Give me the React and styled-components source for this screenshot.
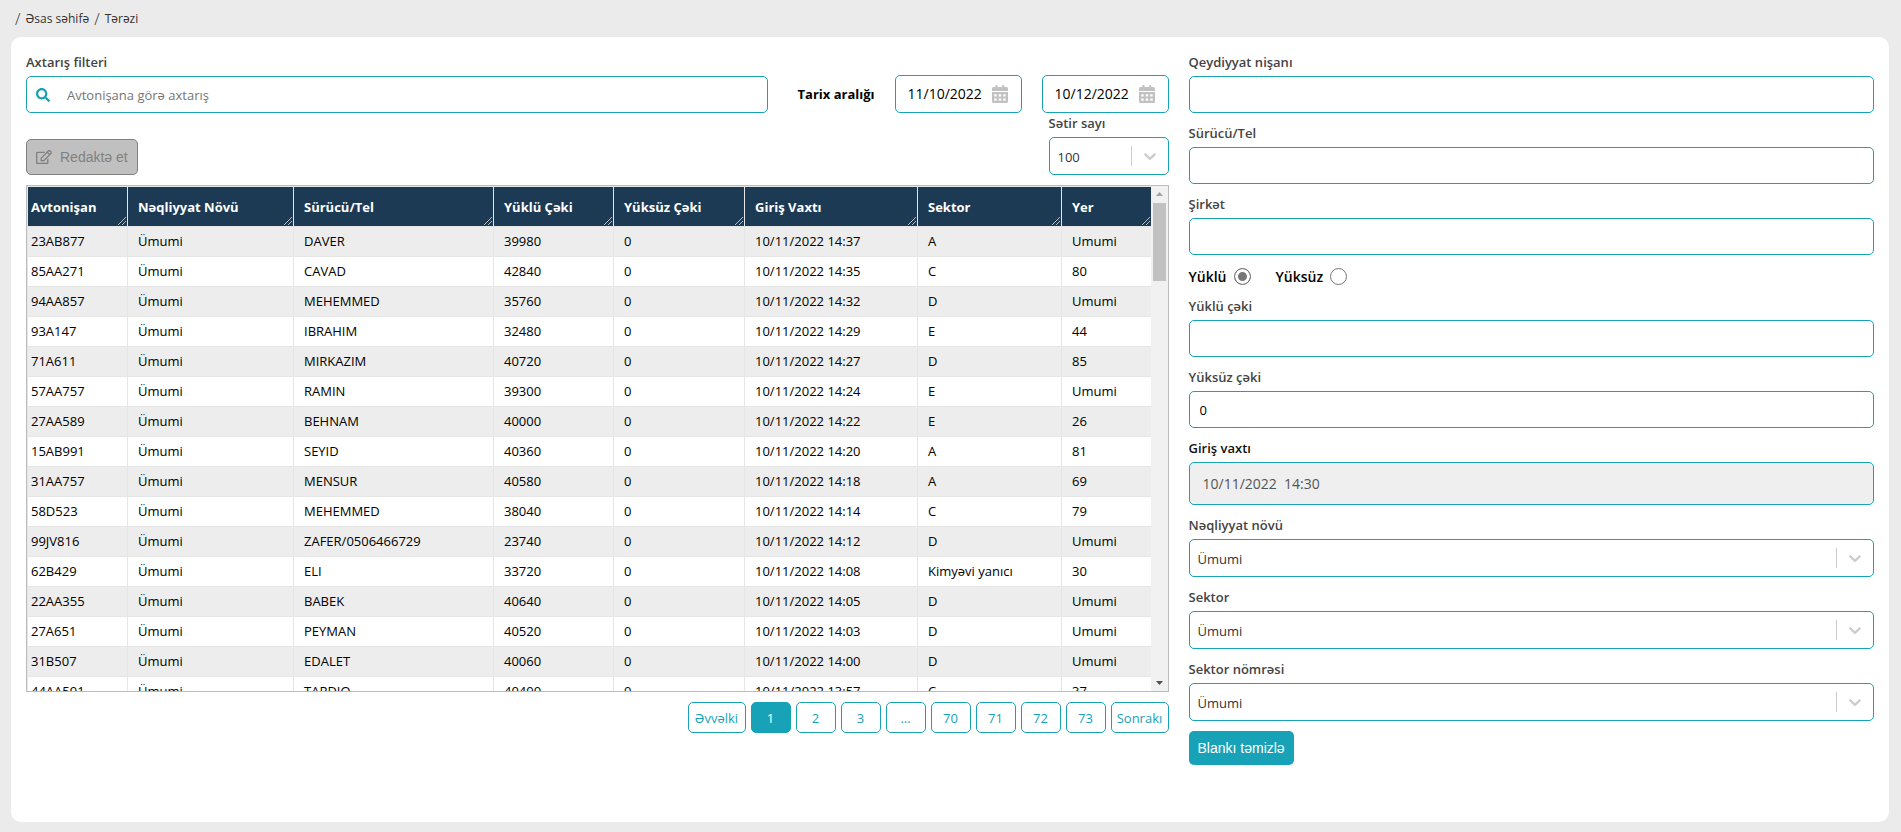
import React, { useId } from "react";
import styled, { createGlobalStyle, css } from "styled-components";
import { FaSearch, FaRegEdit } from "react-icons/fa";

const accent = "#17a2b8";
const sans = `"Open Sans", "Noto Sans", sans-serif`;

const GlobalStyle = createGlobalStyle`
  *, *::before, *::after { box-sizing: border-box; }
  body { margin: 0; background: #ebebeb; color: #000; font: 13px/20px ${sans}; }
  button, input, select { font: inherit; margin: 0; }
`;

const Page = styled.div`
  min-height: 100vh;
  padding: 0 12px 10px 11px;
  display: flex;
  flex-direction: column;
`;

const Breadcrumb = styled.nav`
  height: 37px;
  padding-left: 4px;
  display: flex;
  align-items: center;
  gap: 5px;
  color: #333;
  font-size: 12px;

  a { color: inherit; text-decoration: none; }
`;

const Slash = styled.span`
  font-size: 16px;
  font-weight: 300;
`;

const Card = styled.main`
  flex: 1;
  background: #fff;
  border-radius: 10px;
  padding: 15px;
  display: grid;
  grid-template-columns: 5fr 3fr;
  gap: 20px;
  align-items: start;
`;

const Panel = styled.section`
  min-width: 0;
  display: flex;
  flex-direction: column;
`;

const Form = styled.form`
  min-width: 0;
  display: flex;
  flex-direction: column;
  align-items: stretch;
  gap: 10px;
`;

const FieldBox = styled.div`
  display: flex;
  flex-direction: column;
  gap: 4px;
  flex: ${(p) => (p.$grow ? "1" : "none")};
  width: ${(p) => p.$width || "auto"};
`;

const Label = styled.label`
  font-size: 13px;
  line-height: 20px;
  font-weight: 600;
  color: ${(p) => (p.$strong ? "#111" : "#444")};
`;

const control = css`
  width: 100%;
  border: 1px solid ${accent};
  border-radius: 5px;
  background: #fff;
  outline: none;
`;

const TextInput = styled.input`
  ${control}
  height: ${(p) => (p.disabled ? "43px" : "37px")};
  padding: 0 ${(p) => (p.disabled ? "13px" : "10px")};
  ${(p) => p.disabled && "background: #efefef; color: #545454; font-size: 14px;"}
`;

const SearchBox = styled.div`
  ${control}
  height: 37px;
  display: flex;
  align-items: center;
  gap: 17px;
  padding: 0 9px;
  color: ${accent};

  input {
    flex: 1;
    border: 0;
    padding: 0;
    outline: none;
    background: none;
    font-size: 13px;
  }
  input::placeholder { color: #757575; }
`;

const SelectBox = styled.div`
  ${control}
  height: 38px;
  display: flex;
  align-items: center;
  gap: 8px;
  padding-right: 8px;

  select {
    appearance: none;
    flex: 1;
    min-width: 0;
    height: 100%;
    border: 0;
    padding: 1px 8px 0;
    background: none;
    color: #333;
    outline: none;
  }
`;

const Divider = styled.span`
  width: 1px;
  height: 20px;
  background: #ccc;
`;

const FilterRow = styled.div`
  display: flex;
  align-items: flex-end;
  gap: 20px;
`;

const RangeTitle = styled.span`
  align-self: flex-end;
  margin-left: 10px;
  line-height: 38px;
  font-weight: 700;
  white-space: nowrap;
`;

const DateBox = styled.div`
  ${control}
  width: 127px;
  height: 38px;
  padding: 0 13px 0 12px;
  display: flex;
  align-items: center;
  gap: 6px;

  input {
    flex: 1;
    min-width: 0;
    border: 0;
    padding: 0;
    outline: none;
    background: none;
    color: #000;
    font-size: 14px;
  }
  svg { flex: none; }
`;

const ToolRow = styled.div`
  display: flex;
  align-items: flex-end;
  justify-content: space-between;
  margin-bottom: 10px;
`;

const EditButton = styled.button`
  height: 36px;
  padding: 0 9px;
  display: flex;
  align-items: center;
  gap: 8px;
  border: 1px solid #808080;
  border-radius: 5px;
  background: #c0c0c0;
  color: #808080;
  font: 14px "Liberation Sans", Arial, sans-serif;
`;

const TableFrame = styled.div`
  display: flex;
  height: 507px;
  border: 1px solid #bbb;
`;

const TableScroll = styled.div`
  flex: 1;
  min-width: 0;
  overflow: hidden auto;
  scrollbar-width: none;
`;

const Table = styled.table`
  width: 100%;
  table-layout: fixed;
  border-collapse: collapse;

  th, td {
    height: 30px;
    padding: 0 0 2px 10px;
    border: 1px solid #e6e6e6;
    text-align: left;
    white-space: nowrap;
    overflow: hidden;
  }
  th:first-child, td:first-child { padding-left: 3px; }
  th {
    position: relative;
    height: 40px;
    padding-bottom: 0;
    background: #1c3a53;
    color: #fff;
    font-weight: 700;
  }
  tbody tr:nth-child(odd) { background: #ededed; }
`;

const Grip = styled.svg`
  position: absolute;
  right: 1px;
  bottom: 1px;
`;

const ScrollTrack = styled.div`
  width: 17px;
  background: #f1f1f1;
  display: flex;
  flex-direction: column;
  align-items: center;
`;

const Thumb = styled.div`
  width: 13px;
  height: 78px;
  margin-bottom: auto;
  background: #c1c1c1;
`;

const Pager = styled.nav`
  display: flex;
  justify-content: flex-end;
  gap: 5px;
  margin-top: 10px;
`;

const PageButton = styled.button`
  height: 31px;
  width: ${(p) => (p.$wide ? "58px" : "40px")};
  padding: 0;
  border: 1px solid ${accent};
  border-radius: 5px;
  background: ${(p) => (p.$active ? accent : "#fff")};
  color: ${(p) => (p.$active ? "#fff" : accent)};
`;

const RadioRow = styled.div`
  display: flex;
  gap: 25px;
  height: 21px;
  padding-top: 2px;
`;

const RadioLabel = styled.label`
  display: flex;
  align-items: center;
  gap: 7px;
  font-size: 14px;
  font-weight: 600;

  input {
    appearance: none;
    width: 17px;
    height: 17px;
    border: 1px solid #767676;
    border-radius: 50%;
    background: #fff;
  }
  input:checked {
    background: #767676;
    box-shadow: inset 0 0 0 3px #fff;
  }
`;

const ClearButton = styled.button`
  align-self: flex-start;
  height: 34px;
  padding: 0 9px;
  border: 0;
  border-radius: 5px;
  background: ${accent};
  color: #fff;
  font: 14px "Liberation Sans", Arial, sans-serif;
`;

function Chevron() {
  return (
    <svg width="20" height="20" viewBox="0 0 20 20" fill="#ccc" aria-hidden="true">
      <path d="M4.516 7.548c0.436-0.446 1.043-0.481 1.576 0l3.908 3.747 3.908-3.747c0.533-0.481 1.141-0.446 1.574 0 0.436 0.445 0.408 1.197 0 1.615-0.406 0.418-4.695 4.502-4.695 4.502-0.217 0.223-0.502 0.335-0.787 0.335s-0.57-0.112-0.789-0.335c0 0-4.287-4.084-4.695-4.502s-0.436-1.17 0-1.615z" />
    </svg>
  );
}

function ScrollArrow({ down }) {
  return (
    <svg width="17" height="17" viewBox="0 0 17 17" aria-hidden="true">
      <path d={down ? "M5 7h7l-3.500 4z" : "M5 10h7l-3.500-4z"} fill={down ? "#505050" : "#a3a3a3"} />
    </svg>
  );
}

function CalendarIcon() {
  return (
    <svg width="16" height="18" viewBox="0 0 16 18" aria-hidden="true">
      <path
        fill="#c1c1c1"
        fillRule="evenodd"
        d="M3.500 0h2v2h4.700V0h2v2H14.500a1.500 1.500 0 0 1 1.500 1.500V6H0V3.500A1.500 1.500 0 0 1 1.500 2h2zM0 7h16v9.500a1.500 1.500 0 0 1-1.500 1.500h-13A1.500 1.500 0 0 1 0 16.500zM2.200 9.200v2.400h2.500V9.200zm4.500 0v2.400h2.500V9.200zm4.500 0v2.400h2.500V9.200zm-9 4.200v2.400h2.500v-2.400zm4.500 0v2.400h2.500v-2.400zm4.500 0v2.400h2.500v-2.400z"
      />
    </svg>
  );
}

function Field({ label, strong, ...rest }) {
  const id = useId();
  return (
    <FieldBox>
      <Label htmlFor={id} $strong={strong}>{label}</Label>
      <TextInput id={id} {...rest} />
    </FieldBox>
  );
}

function SelectField({ label, value, width }) {
  const id = useId();
  return (
    <FieldBox $width={width}>
      <Label htmlFor={id}>{label}</Label>
      <SelectBox>
        <select id={id} defaultValue={value}>
          <option>{value}</option>
        </select>
        <Divider />
        <Chevron />
      </SelectBox>
    </FieldBox>
  );
}

function DateField({ value, label }) {
  return (
    <DateBox>
      <input type="text" defaultValue={value} aria-label={label} />
      <CalendarIcon />
    </DateBox>
  );
}

const columns = [
  ["Avtonişan", 100],
  ["Nəqliyyat Növü", 166],
  ["Sürücü/Tel", 200],
  ["Yüklü Çəki", 120],
  ["Yüksüz Çəki", 131],
  ["Giriş Vaxtı", 173],
  ["Sektor", 144],
  ["Yer", 90],
];

const rows = [
  ["23AB877", "DAVER", "39980", "14:37", "A", "Umumi"],
  ["85AA271", "CAVAD", "42840", "14:35", "C", "80"],
  ["94AA857", "MEHEMMED", "35760", "14:32", "D", "Umumi"],
  ["93A147", "IBRAHIM", "32480", "14:29", "E", "44"],
  ["71A611", "MIRKAZIM", "40720", "14:27", "D", "85"],
  ["57AA757", "RAMIN", "39300", "14:24", "E", "Umumi"],
  ["27AA589", "BEHNAM", "40000", "14:22", "E", "26"],
  ["15AB991", "SEYID", "40360", "14:20", "A", "81"],
  ["31AA757", "MENSUR", "40580", "14:18", "A", "69"],
  ["58D523", "MEHEMMED", "38040", "14:14", "C", "79"],
  ["99JV816", "ZAFER/0506466729", "23740", "14:12", "D", "Umumi"],
  ["62B429", "ELI", "33720", "14:08", "Kimyəvi yanıcı", "30"],
  ["22AA355", "BABEK", "40640", "14:05", "D", "Umumi"],
  ["27A651", "PEYMAN", "40520", "14:03", "D", "Umumi"],
  ["31B507", "EDALET", "40060", "14:00", "D", "Umumi"],
  ["44AA591", "TARDIQ", "40400", "13:57", "C", "37"],
];

const pages = ["Əvvəlki", "1", "2", "3", "...", "70", "71", "72", "73", "Sonrakı"];

export default function App() {
  return (
    <Page>
      <GlobalStyle />
      <Breadcrumb>
        <Slash>/</Slash>
        <a href="#home">Əsas səhifə</a>
        <Slash>/</Slash>
        <a href="#scale">Tərəzi</a>
      </Breadcrumb>
      <Card>
        <Panel>
          <FilterRow>
            <FieldBox $grow>
              <Label htmlFor="search">Axtarış filteri</Label>
              <SearchBox>
                <FaSearch size={14} aria-hidden="true" />
                <input id="search" type="text" placeholder="Avtonişana görə axtarış" />
              </SearchBox>
            </FieldBox>
            <RangeTitle>Tarix aralığı</RangeTitle>
            <DateField value="11/10/2022" label="Tarix aralığı 1" />
            <DateField value="10/12/2022" label="Tarix aralığı 2" />
          </FilterRow>
          <ToolRow>
            <EditButton type="button" disabled>
              <FaRegEdit size={16} aria-hidden="true" />
              Redaktə et
            </EditButton>
            <SelectField label="Sətir sayı" value="100" width="120px" />
          </ToolRow>
          <TableFrame>
            <TableScroll>
              <Table>
                <colgroup>
                  {columns.map(([name, width]) => (
                    <col key={name} width={width} />
                  ))}
                </colgroup>
                <thead>
                  <tr>
                    {columns.map(([name]) => (
                      <th key={name} scope="col">
                        {name}
                        <Grip width="8" height="8" viewBox="0 0 8 8" aria-hidden="true">
                          <path d="M0 8L8 0M4 8L8 4" stroke="#b5bdc4" fill="none" />
                        </Grip>
                      </th>
                    ))}
                  </tr>
                </thead>
                <tbody>
                  {rows.map(([plate, driver, weight, time, sector, place]) => (
                    <tr key={plate}>
                      <td>{plate}</td>
                      <td>Ümumi</td>
                      <td>{driver}</td>
                      <td>{weight}</td>
                      <td>0</td>
                      <td>10/11/2022 {time}</td>
                      <td>{sector}</td>
                      <td>{place}</td>
                    </tr>
                  ))}
                </tbody>
              </Table>
            </TableScroll>
            <ScrollTrack>
              <ScrollArrow />
              <Thumb />
              <ScrollArrow down />
            </ScrollTrack>
          </TableFrame>
          <Pager>
            {pages.map((page, i) => (
              <PageButton
                key={page}
                type="button"
                $wide={i === 0 || i === pages.length - 1}
                $active={page === "1"}
              >
                {page}
              </PageButton>
            ))}
          </Pager>
        </Panel>
        <Form>
          <Field label="Qeydiyyat nişanı" />
          <Field label="Sürücü/Tel" />
          <Field label="Şirkət" />
          <RadioRow>
            <RadioLabel>
              Yüklü
              <input type="radio" name="load" defaultChecked />
            </RadioLabel>
            <RadioLabel>
              Yüksüz
              <input type="radio" name="load" />
            </RadioLabel>
          </RadioRow>
          <Field label="Yüklü çəki" />
          <Field label="Yüksüz çəki" defaultValue="0" />
          <Field label="Giriş vaxtı" strong disabled defaultValue="10/11/2022  14:30" />
          <SelectField label="Nəqliyyat növü" value="Ümumi" />
          <SelectField label="Sektor" value="Ümumi" />
          <SelectField label="Sektor nömrəsi" value="Ümumi" />
          <ClearButton type="button">Blankı təmizlə</ClearButton>
        </Form>
      </Card>
    </Page>
  );
}
